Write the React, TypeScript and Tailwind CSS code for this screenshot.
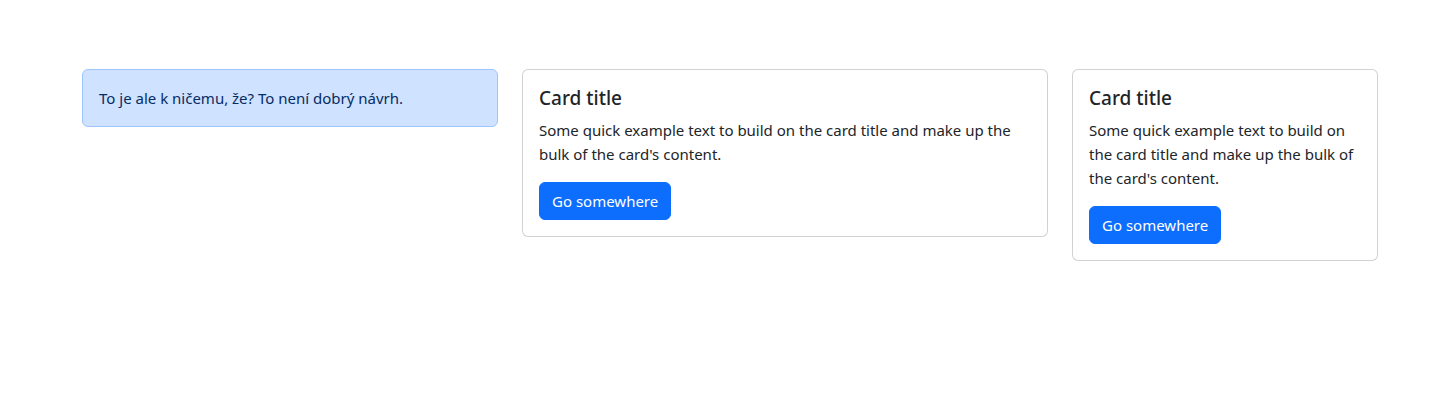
export default function App() {
    const cardText = "Some quick example text to build on the card title and make up the bulk of the card's content.";

    return (
        <main className="min-h-[395px] bg-white font-['Noto_Sans',sans-serif] text-[15px] leading-6 text-[#212529]">
            <section className="flex items-start gap-6 pl-[82px] pt-[69px]">
                {/* alert */}
                <div className="w-[416px] rounded-md border border-[#9ec5fe] bg-[#cfe2ff] px-4 py-4 text-[#052c65]">
                    To je ale k ničemu, že? To není dobrý návrh.
                </div>

                {/* cards */}
                <article className="w-[526px] rounded-md border border-black/[.175] bg-white p-4">
                    <h5 className="mb-2 text-[19px] font-medium leading-6">Card title</h5>
                    <p className="mb-4">{cardText}</p>
                    <button className="rounded-md border border-[#0d6efd] bg-[#0d6efd] px-3 py-1.5 text-white">
                        Go somewhere
                    </button>
                </article>

                <article className="w-[306px] rounded-md border border-black/[.175] bg-white p-4">
                    <h5 className="mb-2 text-[19px] font-medium leading-6">Card title</h5>
                    <p className="mb-4">{cardText}</p>
                    <button className="rounded-md border border-[#0d6efd] bg-[#0d6efd] px-3 py-1.5 text-white">
                        Go somewhere
                    </button>
                </article>
            </section>
        </main>
    )
}
